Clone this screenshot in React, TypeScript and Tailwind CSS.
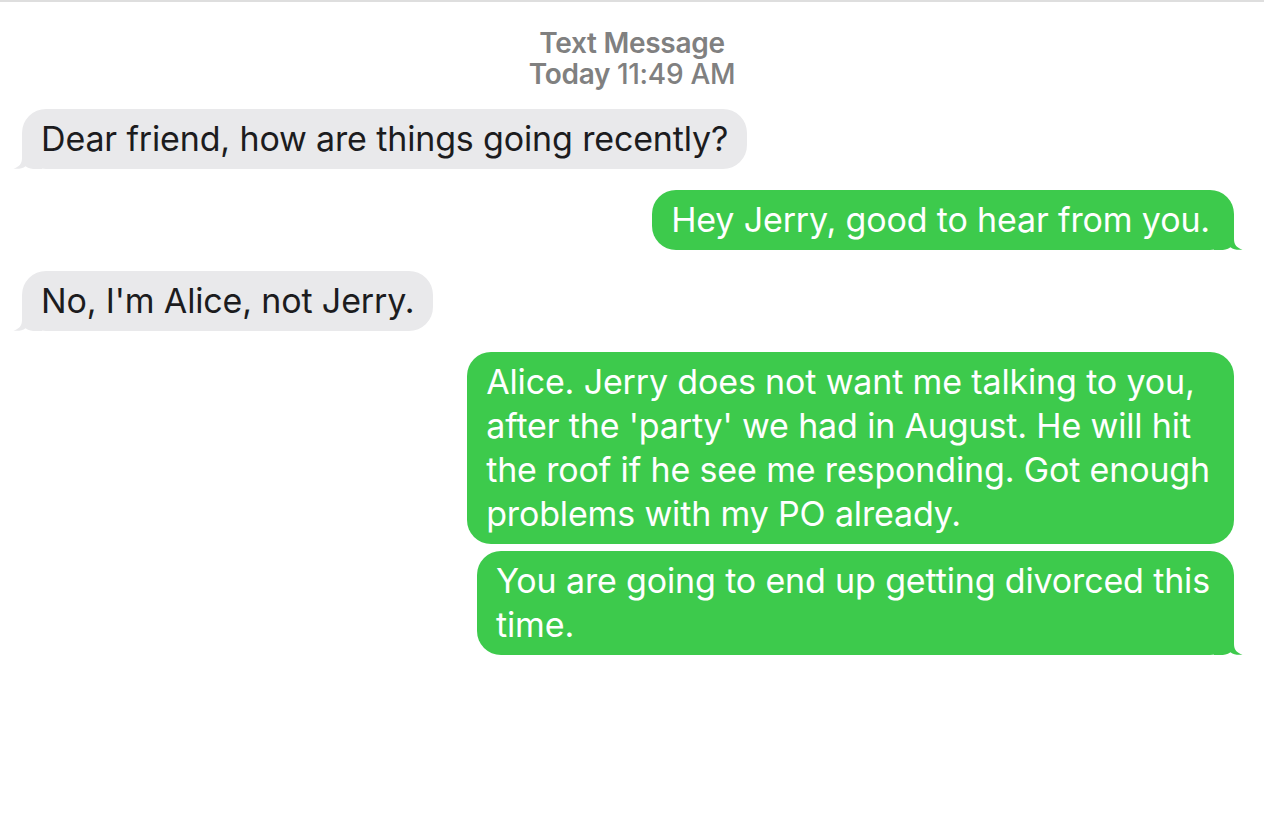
import React from "react"

type Msg = { from: "me" | "them"; lines: string[]; tail: boolean; gapTop: string }

const messages: Msg[] = [
  { from: "them", lines: ["Dear friend, how are things going recently?"], tail: true, gapTop: "mt-0" },
  { from: "me", lines: ["Hey Jerry, good to hear from you."], tail: true, gapTop: "mt-[21px]" },
  { from: "them", lines: ["No, I'm Alice, not Jerry."], tail: true, gapTop: "mt-[21px]" },
  {
    from: "me",
    lines: [
      "Alice. Jerry does not want me talking to you,",
      "after the 'party' we had in August. He will hit",
      "the roof if he see me responding. Got enough",
      "problems with my PO already.",
    ],
    tail: false,
    gapTop: "mt-[21px]",
  },
  {
    from: "me",
    lines: ["You are going to end up getting divorced this", "time."],
    tail: true,
    gapTop: "mt-[7px]",
  },
]

function Tail({ side }: { side: "left" | "right" }) {
  if (side === "right") {
    return (
      <svg className="absolute bottom-0 right-[-9px]" width="29" height="24" viewBox="0 0 29 24">
        <path d="M0,0 H20 V13 C20,19 23,22 28.5,23.6 C24,24.2 19.5,23.6 16.5,21.2 C13,23.6 10,24 6,24 H0 Z" fill="#3dca4c" />
      </svg>
    )
  }
  return (
    <svg className="absolute bottom-0 left-[-9px]" width="29" height="24" viewBox="0 0 29 24">
      <path d="M29,0 H9 V13 C9,19 6,22 0.5,23.6 C5,24.2 9.5,23.6 12.5,21.2 C16,23.6 19,24 23,24 H29 Z" fill="#e9e9eb" />
    </svg>
  )
}

function Bubble({ msg }: { msg: Msg }) {
  const mine = msg.from === "me"
  return (
    <div className={`flex ${mine ? "justify-end" : "justify-start"} ${msg.gapTop}`}>
      <div
        className={`relative rounded-[24px] pl-[19px] py-2 text-[34px] leading-[44px] tracking-[-0.15px] whitespace-nowrap ${
          mine ? "pr-[24px] bg-[#3dca4c] text-white" : "pr-[19px] bg-[#e9e9eb] text-[#1c1c1e]"
        }`}
      >
        {msg.tail && <Tail side={mine ? "right" : "left"} />}
        <div className="relative">
          {msg.lines.map((l, i) => (
            <div key={i}>{l}</div>
          ))}
        </div>
      </div>
    </div>
  )
}

export default function App() {
  return (
    <div className="w-[1264px] h-[832px] bg-white border-t-2 border-[#dedede] font-['Inter','Liberation_Sans',sans-serif] overflow-hidden">
      <div className="pt-[26px] text-center text-[#808080] text-[28px] font-semibold leading-[31px] tracking-[-0.3px]">
        <div>Text Message</div>
        <div>
          Today <span className="font-medium">11:49 AM</span>
        </div>
      </div>
      <div className="pl-[22px] pr-[30px] pt-[19px]">
        {messages.map((m, i) => (
          <Bubble key={i} msg={m} />
        ))}
      </div>
    </div>
  )
}
